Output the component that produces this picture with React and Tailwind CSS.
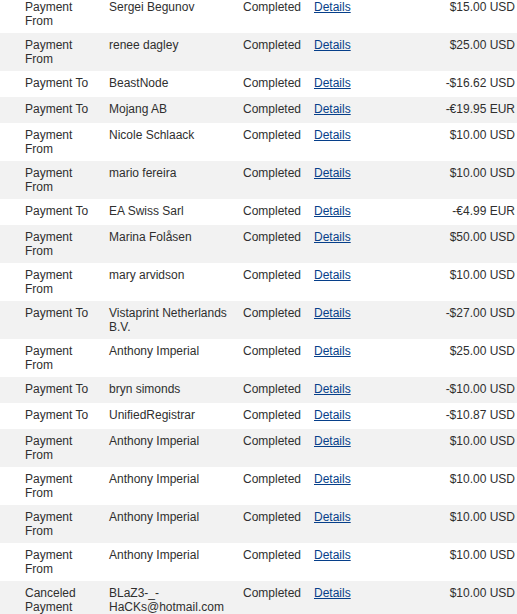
// Transaction history list: alternating rows with type, name, status, details link and amount.
const rows = [
  { type: "Payment From", name: "Sergei Begunov", amount: "$15.00 USD" },
  { type: "Payment From", name: "renee dagley", amount: "$25.00 USD" },
  { type: "Payment To", name: "BeastNode", amount: "-$16.62 USD" },
  { type: "Payment To", name: "Mojang AB", amount: "-€19.95 EUR" },
  { type: "Payment From", name: "Nicole Schlaack", amount: "$10.00 USD" },
  { type: "Payment From", name: "mario fereira", amount: "$10.00 USD" },
  { type: "Payment To", name: "EA Swiss Sarl", amount: "-€4.99 EUR" },
  { type: "Payment From", name: "Marina Folåsen", amount: "$50.00 USD" },
  { type: "Payment From", name: "mary arvidson", amount: "$10.00 USD" },
  { type: "Payment To", name: "Vistaprint Netherlands B.V.", amount: "-$27.00 USD" },
  { type: "Payment From", name: "Anthony Imperial", amount: "$25.00 USD" },
  { type: "Payment To", name: "bryn simonds", amount: "-$10.00 USD" },
  { type: "Payment To", name: "UnifiedRegistrar", amount: "-$10.87 USD" },
  { type: "Payment From", name: "Anthony Imperial", amount: "$10.00 USD" },
  { type: "Payment From", name: "Anthony Imperial", amount: "$10.00 USD" },
  { type: "Payment From", name: "Anthony Imperial", amount: "$10.00 USD" },
  { type: "Payment From", name: "Anthony Imperial", amount: "$10.00 USD" },
  { type: "Canceled Payment", name: "BLaZ3-_-HaCKs@hotmail.com", amount: "$10.00 USD" },
];

function Row({ row, shaded }) {
  return (
    <div
      className={`flex items-start min-h-[26px] py-[5px] ${shaded ? "bg-[#f2f2f2]" : "bg-white"}`}
    >
      <div className="w-[84px] shrink-0 pl-[25px] box-content pr-0">
        <div className="w-[72px]">{row.type}</div>
      </div>
      <div className="w-[134px] shrink-0">
        <div className="w-[126px]">{row.name}</div>
      </div>
      <div className="w-[71px] shrink-0">Completed</div>
      <div className="shrink-0">
        <a href="#" className="text-[#063f8a] underline">
          Details
        </a>
      </div>
      <div className="flex-1 text-right pr-[2px] whitespace-nowrap">{row.amount}</div>
    </div>
  );
}

export default function App() {
  return (
    <div className="w-[517px] h-[614px] overflow-hidden bg-white">
      <div
        className="mt-[-5px] text-[12px] leading-[14px] text-[#2f2f2f]"
        style={{ fontFamily: '"Liberation Sans", Arial, sans-serif' }}
      >
        {rows.map((row, i) => (
          <Row key={i} row={row} shaded={i % 2 === 1} />
        ))}
      </div>
    </div>
  );
}
